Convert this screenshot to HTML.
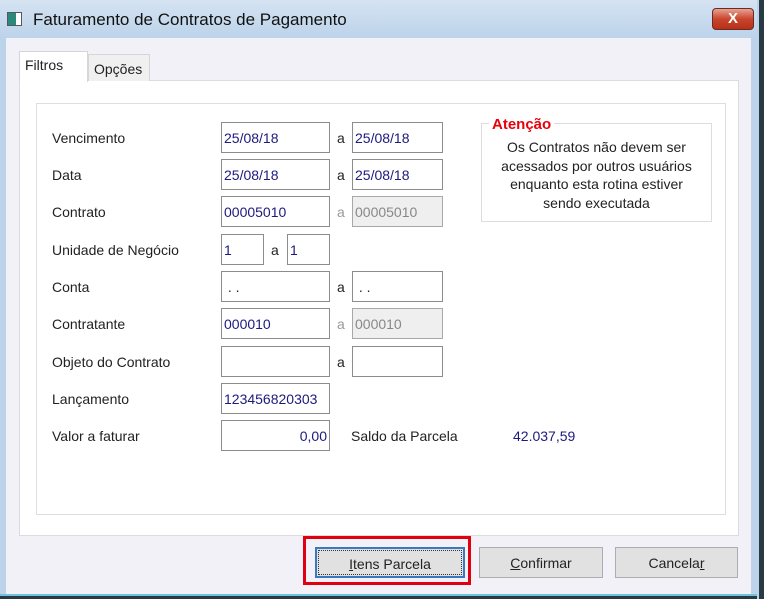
<!DOCTYPE html>
<html><head><meta charset="utf-8"><style>
*{margin:0;padding:0;box-sizing:border-box}
body{width:764px;height:599px;overflow:hidden;background:#bcd3ea;font-family:"Liberation Sans",sans-serif;font-size:14px;color:#222;position:relative}
.a{position:absolute}
.in{position:absolute;border:1px solid #8c8c8c;background:#fff;height:31px;color:#1c1a7e;padding:7px 2px;white-space:nowrap;overflow:hidden;font-size:14px}
.dis{background:#efefef;color:#888;border-color:#a8a8a8}
.lb{position:absolute;left:52px}
.btn{position:absolute;top:547px;height:31px;border:1px solid #adadad;background:#e1e1e1;text-align:center;padding-top:7px;font-size:14px}
</style></head><body>
<div class="a" style="left:0;top:0;width:764px;height:38px;background:linear-gradient(#d5e3f2,#bcd3ea)"></div>
<div class="a" style="left:7px;top:12px;width:15px;height:14px;border:1px solid #556;background:linear-gradient(90deg,#2a8a7a 60%,#fff 60%)"></div>
<div class="a" style="left:33px;top:10px;font-size:17px;color:#111">Faturamento de Contratos de Pagamento</div>
<div class="a" style="left:712px;top:8px;width:42px;height:22px;border:1px solid #6b2b20;border-radius:4px;background:linear-gradient(#e8a393,#c9452c 50%,#b8301a);color:#fff;font-weight:bold;text-align:center;font-size:15px;line-height:20px">X</div>
<div class="a" style="left:6px;top:38px;width:745px;height:556px;background:#f1f1f7"></div>
<div class="a" style="left:0;top:594px;width:764px;height:5px;background:#2a3a44;border-top:2px solid #6fc4dc"></div>
<div class="a" style="left:757px;top:0;width:7px;height:599px;background:#2a3a44;border-left:2px solid #bcd3ea"></div>
<!-- tabs -->
<div class="a" style="left:19px;top:80px;width:720px;height:456px;background:#fff;border:1px solid #dcdcdc"></div>
<div class="a" style="left:88px;top:54px;width:62px;height:27px;background:#f0f0f0;border:1px solid #d6d6d6;border-bottom:none;padding:6px 0 0 5px">Opções</div>
<div class="a" style="left:19px;top:51px;width:69px;height:31px;background:#fff;border:1px solid #d6d6d6;border-bottom:none;padding:5px 0 0 5px">Filtros</div>
<div class="a" style="left:36px;top:103px;width:690px;height:412px;border:1px solid #dedede;background:#fff"></div>
<!-- attention -->
<div class="a" style="left:481px;top:123px;width:231px;height:99px;border:1px solid #ddd"></div>
<div class="a" style="left:489px;top:116px;background:#fff;padding:0 3px;color:#e8000a;font-weight:bold;font-size:15px">Atenção</div>
<div class="a" style="left:481px;top:138px;width:231px;text-align:center;line-height:18.5px;font-size:14px">Os Contratos não devem ser<br>acessados por outros usuários<br>enquanto esta rotina estiver<br>sendo executada</div>
<!-- rows -->
<div class="lb" style="top:130px">Vencimento</div>
<div class="in" style="left:221px;top:122px;width:109px">25/08/18</div><div class="a" style="left:337px;top:130px">a</div><div class="in" style="left:352px;top:122px;width:91px">25/08/18</div>
<div class="lb" style="top:167px">Data</div>
<div class="in" style="left:221px;top:159px;width:109px">25/08/18</div><div class="a" style="left:337px;top:167px">a</div><div class="in" style="left:352px;top:159px;width:91px">25/08/18</div>
<div class="lb" style="top:204px">Contrato</div>
<div class="in" style="left:221px;top:196px;width:109px">00005010</div><div class="a" style="left:337px;top:204px;color:#999">a</div><div class="in dis" style="left:352px;top:196px;width:91px">00005010</div>
<div class="lb" style="top:242px">Unidade de Negócio</div>
<div class="in" style="left:221px;top:234px;width:43px">1</div><div class="a" style="left:271px;top:242px">a</div><div class="in" style="left:287px;top:234px;width:43px">1</div>
<div class="lb" style="top:279px">Conta</div>
<div class="in" style="left:221px;top:271px;width:109px;color:#222">&nbsp;. .</div><div class="a" style="left:337px;top:279px">a</div><div class="in" style="left:352px;top:271px;width:91px;color:#222">&nbsp;. .</div>
<div class="lb" style="top:316px">Contratante</div>
<div class="in" style="left:221px;top:308px;width:109px">000010</div><div class="a" style="left:337px;top:316px;color:#999">a</div><div class="in dis" style="left:352px;top:308px;width:91px">000010</div>
<div class="lb" style="top:354px">Objeto do Contrato</div>
<div class="in" style="left:221px;top:346px;width:109px"></div><div class="a" style="left:337px;top:354px">a</div><div class="in" style="left:352px;top:346px;width:91px"></div>
<div class="lb" style="top:391px">Lançamento</div>
<div class="in" style="left:221px;top:383px;width:109px">123456820303</div>
<div class="lb" style="top:428px">Valor a faturar</div>
<div class="in" style="left:221px;top:420px;width:109px;text-align:right">0,00</div>
<div class="a" style="left:351px;top:428px">Saldo da Parcela</div>
<div class="a" style="left:513px;top:428px;color:#1c1a7e">42.037,59</div>
<!-- buttons -->
<div class="a" style="left:303px;top:536px;width:168px;height:49px;border:3px solid #e00010"></div>
<div class="btn" style="left:315px;width:150px;border:2px solid #3b78c0;outline:1px dotted #333;outline-offset:-4px"><u>I</u>tens Parcela</div>
<div class="btn" style="left:479px;width:124px"><u>C</u>onfirmar</div>
<div class="btn" style="left:615px;width:123px">Cancela<u>r</u></div>
</body></html>
